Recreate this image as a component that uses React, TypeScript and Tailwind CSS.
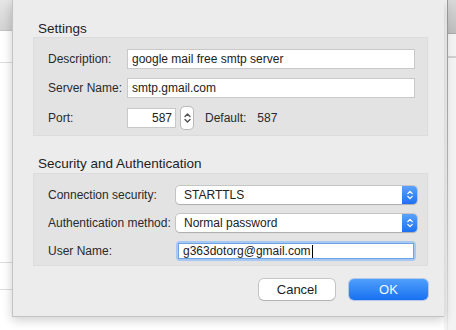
import React from 'react'

const FONT = "font-['Liberation_Sans',Arial,Helvetica,sans-serif]"

function Chevrons({ className }: { className?: string }) {
  return (
    <svg viewBox="0 0 8 12" className={className} fill="none" stroke="currentColor" strokeWidth="1.3" strokeLinecap="round" strokeLinejoin="round">
      <path d="M1.8 4.6 4 2.4l2.2 2.2" />
      <path d="M1.8 7.4 4 9.6l2.2-2.2" />
    </svg>
  )
}

function TextField({ value, width }: { value: string; width: string }) {
  return (
    <div className={`flex h-[20px] ${width} items-center border border-[#c9c9c9] bg-white pl-[4px] text-[12px] text-[#222]`}>
      {value}
    </div>
  )
}

function Select({ value }: { value: string }) {
  return (
    <div className="flex h-[18px] w-[241px] items-stretch rounded-[4px] bg-white shadow-[0_0_0_1px_rgba(0,0,0,0.13),0_1px_1px_rgba(0,0,0,0.12)]">
      <div className="flex flex-1 items-center pl-[8px] text-[12px] text-[#222]">{value}</div>
      <div className="flex w-[15px] items-center justify-center rounded-r-[4px] bg-gradient-to-b from-[#5aa2fa] to-[#1c70f2] text-white">
        <Chevrons className="h-[12px] w-[8px]" />
      </div>
    </div>
  )
}

function Row({ label, labelWidth, children }: { label: string; labelWidth: string; children: React.ReactNode }) {
  return (
    <div className="flex items-center">
      <div className={`${labelWidth} shrink-0 text-[12px] text-[#2a2a2a]`}>{label}</div>
      {children}
    </div>
  )
}

function LeftStrip() {
  return (
    <div className="flex w-[12px] shrink-0 flex-col bg-white">
      <div className="h-[31px] border-b border-[#c4c4c4] bg-gradient-to-b from-[#e6e6e6] to-[#d2d2d2]" />
      <div className="h-[32px] border-b border-[#dedede]" />
      <div className="h-[200px] border-b border-[#dedede]" />
      <div className="h-[27px] border-b border-[#dedede]" />
    </div>
  )
}

function RightStrip() {
  return (
    <div className="flex w-[12px] shrink-0 bg-[#f3f3f3]">
      <div className="w-[3px]" />
      <div className="w-[1px] bg-gradient-to-b from-[#9c9c9c] via-[#b8b8b8] to-[#e8e8e8]" />
      <div className="flex flex-1 flex-col">
        <div className="h-[34px] border-b border-[#a9a9a9] bg-gradient-to-b from-[#d8d8d8] to-[#bdbdbd]" />
        <div className="h-[24px] border-b-2 border-double border-[#cfcfcf]" />
      </div>
    </div>
  )
}

export default function App() {
  return (
    <div className={`flex h-[330px] w-[456px] overflow-hidden bg-white ${FONT}`}>
      <LeftStrip />

      <div className="flex w-[432px] shrink-0 flex-col">
        <div className="relative z-10 flex h-[317px] flex-col border-b border-l border-[#c3c3c3] bg-[#ececec] shadow-[0_3px_10px_rgba(0,0,0,0.2)]">
          <div className="mt-[21px] h-[16px] pl-[25px] text-[13.5px] leading-[16px] text-[#1e1e1e]">Settings</div>

          <div className="ml-[20px] mr-[16px] flex flex-col gap-[9px] border border-[#dcdcdc] bg-[#e3e3e3] pb-[6px] pl-[14px] pt-[11px]">
            <Row label="Description:" labelWidth="w-[79px]">
              <TextField value="google mail free smtp server" width="w-[288px]" />
            </Row>
            <Row label="Server Name:" labelWidth="w-[79px]">
              <TextField value="smtp.gmail.com" width="w-[288px]" />
            </Row>
            <Row label="Port:" labelWidth="w-[79px]">
              <div className="flex h-[20px] w-[49px] items-center justify-end border border-[#c9c9c9] bg-white pr-[3px] text-[12px] text-[#222]">
                587
              </div>
              <div className="ml-[5px] flex h-[22px] w-[12px] items-center justify-center rounded-[4px] bg-white text-[#555] shadow-[0_0_0_1px_rgba(0,0,0,0.18)]">
                <Chevrons className="h-[16px] w-[9px]" />
              </div>
              <span className="ml-[12px] text-[12px] text-[#2a2a2a]">Default:</span>
              <span className="ml-[11px] text-[12px] text-[#2a2a2a]">587</span>
            </Row>
          </div>

          <div className="mt-[20px] h-[16px] pl-[25px] text-[13.5px] leading-[16px] text-[#1e1e1e]">Security and Authentication</div>

          <div className="ml-[20px] mr-[16px] mt-[1px] flex flex-col border border-[#dcdcdc] bg-[#e3e3e3] pb-[4px] pl-[14px] pt-[12px]">
            <Row label="Connection security:" labelWidth="w-[128px]">
              <Select value="STARTTLS" />
            </Row>
            <div className="mt-[10px]">
              <Row label="Authentication method:" labelWidth="w-[128px]">
                <Select value="Normal password" />
              </Row>
            </div>
            <div className="mt-[9px]">
              <Row label="User Name:" labelWidth="w-[128px]">
                <div className="h-[20px] w-[240px] rounded-[4px] bg-[#a6c8f3] p-[2px]">
                  <div className="flex h-full items-center border border-[#6fa2e4] bg-white pl-[4px] text-[12px] text-[#222]">
                    g363dotorg@gmail.com
                    <span className="ml-[1px] inline-block h-[13px] w-[1px] bg-black" />
                  </div>
                </div>
              </Row>
            </div>
          </div>

          <div className="mr-[16px] mt-[13px] flex justify-end gap-[14px]">
            <button className="h-[21px] w-[76px] rounded-[5px] bg-white text-[13px] text-[#222] shadow-[0_0_0_1px_rgba(0,0,0,0.16),0_1px_1px_rgba(0,0,0,0.1)]">
              Cancel
            </button>
            <button className="h-[21px] w-[79px] rounded-[5px] bg-gradient-to-b from-[#4f9ffb] to-[#1670f1] text-[13px] text-[#f4f8ff] shadow-[0_0_0_1px_rgba(10,90,220,0.25)]">
              OK
            </button>
          </div>
        </div>
        <div className="flex-1 bg-white" />
      </div>

      <RightStrip />
    </div>
  )
}
